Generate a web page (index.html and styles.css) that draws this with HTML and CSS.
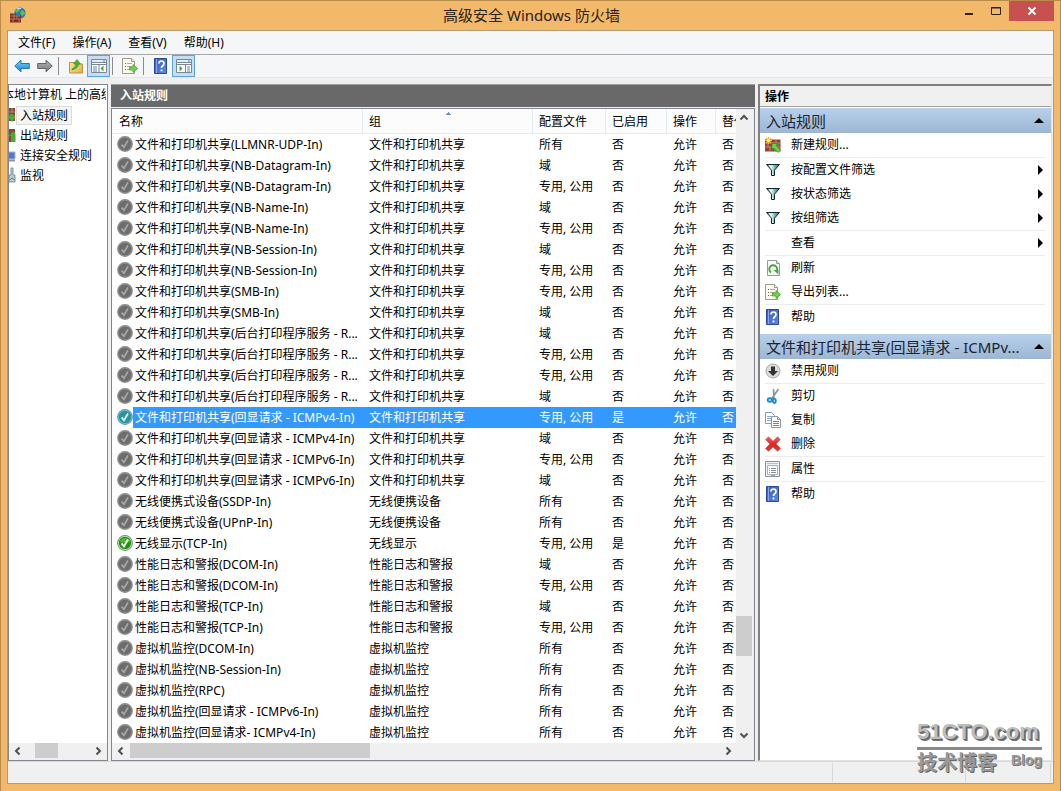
FILE: index.html
```html
<!DOCTYPE html>
<html lang="zh-CN">
<head>
<meta charset="utf-8">
<meta name="viewport" content="width=device-width, initial-scale=1">
<title>高级安全 Windows 防火墙</title>
<link rel="stylesheet" href="styles.css">
</head>
<body>
<svg class="sprite" aria-hidden="true">
  <defs>
    <linearGradient id="g-blue" x1="0" y1="0" x2="0" y2="1"><stop offset="0" stop-color="#7fd0fa"/><stop offset="1" stop-color="#0f86d6"/></linearGradient>
    <linearGradient id="g-grey" x1="0" y1="0" x2="0" y2="1"><stop offset="0" stop-color="#b5b5b5"/><stop offset="1" stop-color="#7b7b7b"/></linearGradient>
    <linearGradient id="g-help" x1="0" y1="0" x2="1" y2="1"><stop offset="0" stop-color="#3558b8"/><stop offset="1" stop-color="#5f8be4"/></linearGradient>
    <linearGradient id="g-red" x1="0" y1="0" x2="0" y2="1"><stop offset="0" stop-color="#ee6a60"/><stop offset=".5" stop-color="#e02222"/><stop offset="1" stop-color="#d44038"/></linearGradient>
    <linearGradient id="g-folder" x1="0" y1="0" x2="1" y2="1"><stop offset="0" stop-color="#fbe7a0"/><stop offset="1" stop-color="#dfb04a"/></linearGradient>
    <linearGradient id="g-funnel" x1="0" y1="0" x2="1" y2="0"><stop offset="0" stop-color="#2f8f8f"/><stop offset=".35" stop-color="#f2fbfb"/><stop offset=".6" stop-color="#7fbdbd"/><stop offset="1" stop-color="#0e6f72"/></linearGradient>
    <symbol id="off" viewBox="0 0 16 16"><circle cx="8" cy="8" r="7.9" fill="#8b8b8b"/><circle cx="8" cy="8" r="6.3" fill="#6d6d6d"/><path d="M4.6 8.6 7 11.4 11 4.4" fill="none" stroke="#a9a9a9" stroke-width="1.7"/></symbol>
    <symbol id="on" viewBox="0 0 16 16"><circle cx="8" cy="8" r="7.9" fill="#6f8f6c"/><circle cx="8" cy="8" r="6.9" fill="#d5ead0"/><circle cx="8" cy="8" r="6.2" fill="#23930f"/><path d="M2.5 6.5a6 6 0 0 1 11 0Q8 9 2.5 6.5" fill="#4db836"/><path d="M4.6 8.4 7 11.3 11 4.6" fill="none" stroke="#fff" stroke-width="1.9"/></symbol>
    <symbol id="on-sel" viewBox="0 0 16 16"><circle cx="8" cy="8" r="7.9" fill="#4f95c4"/><circle cx="8" cy="8" r="6.9" fill="#82c0df"/><circle cx="8" cy="8" r="6.2" fill="#2b9690"/><path d="M4.6 8.4 7 11.3 11 4.6" fill="none" stroke="#cfeaff" stroke-width="1.9"/></symbol>
    <symbol id="app" viewBox="0 0 16 16"><circle cx="10" cy="6" r="5.6" fill="#2479b9"/><path d="M5 4q3-4 6-3l-2 3-2 2M12 3q3 1 3 4l-3 2-2-3z" fill="#62bd4b"/><path d="M7 2q2-1 4-.5" stroke="#c6eaf7" fill="none"/><path d="M0 6.500h6v2h5v7H0z" fill="#7d2f22"/><path d="M0 9h10M0 12h11M4 7v2M7 9v3M3 12v3M9 12v3M4 9v3" stroke="#c1806f" stroke-width=".8"/></symbol>
    <symbol id="back" viewBox="0 0 16 16"><path d="M.7 8 7 2.2V5.500h8.300v5H7v3.300z" fill="url(#g-blue)" stroke="#2a75ad"/></symbol>
    <symbol id="forward" viewBox="0 0 16 16"><path d="M15.300 8 9 2.200V5.500H.7v5H9v3.300z" fill="url(#g-grey)" stroke="#656565"/></symbol>
    <symbol id="folder-up" viewBox="0 0 16 16"><path d="M1.500 4.500h5l1 1.500h7v9h-13z" fill="url(#g-folder)" stroke="#bd933f"/><path d="M4 11q4-2 4-5H5.500L9 1.500 12.500 6H10.500q0 4-6.500 6z" fill="#49b82c" stroke="#2c8b1c" stroke-width=".6"/></symbol>
    <symbol id="pane-left" viewBox="0 0 16 16"><path d="M.5 1.500h15v13H.5z" fill="#fff" stroke="#7a8796"/><path d="M1 2h14v2H1z" fill="#e8edf3"/><path d="M.5 4.500h15M8 7v7M.5 6.500h15" stroke="#7a8796"/><path d="M2 9h4M2 11h4M2 13h4M12 3h2" stroke="#5f86b8"/><path d="M12.500 7.500v6L9.500 10.500z" fill="#44a82d"/></symbol>
    <symbol id="pane-right" viewBox="0 0 16 16"><path d="M.5 1.500h15v13H.5z" fill="#fff" stroke="#7a8796"/><path d="M1 2h14v2H1z" fill="#e8edf3"/><path d="M.5 4.500h15M9.500 7v7M.5 6.500h15" stroke="#7a8796"/><path d="M11 9h3M11 11h3M11 13h3M12 3h2" stroke="#5f86b8"/><path d="M3.500 7.500v6L6.500 10.500z" fill="#44a82d"/></symbol>
    <symbol id="export" viewBox="0 0 16 16"><path d="M.5.5h9l3 3v12H.5z" fill="#fdfaed" stroke="#9b9a8c"/><path d="M9.500.5v3h3" fill="#eee" stroke="#9b9a8c"/><path d="M3 5.500h1M3 8.500h1M3 11.500h1" stroke="#666"/><path d="M5 5.500h5M5 8.500h5M5 11.500h4" stroke="#aaa"/><path d="M7.500 9h3.500V6.500l4.700 4-4.700 4V12H7.500z" fill="#6fd24e" stroke="#3a9d24" stroke-width=".7"/></symbol>
    <symbol id="help" viewBox="0 0 16 16"><path d="M1.500.5h12v15h-12z" fill="url(#g-help)" stroke="#2b479c"/><path d="M3.500 1v14" stroke="#86a7ec"/><path d="M6 5.500Q6 3 8.500 3T11 5.500Q11 7 9.500 8 8.500 8.600 8.500 10" fill="none" stroke="#fff" stroke-width="1.700"/><path d="M7.600 11.500h1.800v1.800H7.600z" fill="#fff"/></symbol>
    <symbol id="new-rule" viewBox="0 0 16 16"><path d="M0 2.500h15.500v12H0z" fill="#93432f"/><path d="M0 6h15.500M0 10h15.500M5 2.500V6M11 2.500V6M8 6v4M3 6v4M13 6v4M5 10v4.500M10 10v4.500" stroke="#d09a83" stroke-width=".8"/><path d="M3.500 0v7M0 3.500h7M1 1l5 5M6 1 1 6" stroke="#f5b63a" stroke-width="1.200"/><circle cx="3.500" cy="3.500" r="1.500" fill="#fff3ab"/><path d="M7 6.500h6l-2 2 4.500 4.500-2.500 2.500L8.500 11 7 13z" fill="#6cd44b" stroke="#2d8c1d" stroke-width=".7"/></symbol>
    <symbol id="filter" viewBox="0 0 16 16"><path d="M1.500 2.500h13L9.500 8.200V13.500h-3V8.200z" fill="url(#g-funnel)" stroke="#10282b"/></symbol>
    <symbol id="refresh" viewBox="0 0 16 16"><path d="M2.500.5h9l3 3v12h-12z" fill="#f7f9f7" stroke="#999"/><path d="M11.500.5v3h3" fill="#ddd" stroke="#999"/><path d="M6 12.500a4 4 0 1 1 5.500-1" fill="none" stroke="#4ba53a" stroke-width="1.900"/><path d="M8.500 10h5v4.500z" fill="#4ba53a"/></symbol>
    <symbol id="disable" viewBox="0 0 16 16"><circle cx="8" cy="8" r="7" fill="#dcdcdc" stroke="#aaa"/><path d="M6 3.500h4V8h3l-5 5-5-5h3z" fill="#333"/></symbol>
    <symbol id="cut" viewBox="0 0 16 16"><path d="M13.500 1 6.500 11M8.500 1l.5 10" stroke="#8297a8" stroke-width="1.700"/><ellipse cx="4.800" cy="12" rx="2.100" ry="1.800" fill="#bfe3f7" stroke="#188bd0" stroke-width="1.800"/><ellipse cx="9.300" cy="12.800" rx="1.500" ry="2.200" fill="#bfe3f7" stroke="#188bd0" stroke-width="1.800"/></symbol>
    <symbol id="copy" viewBox="0 0 16 16"><path d="M.5.5h6l3 3v8h-9z" fill="#fff" stroke="#8c98a3"/><path d="M2 4.500h4M2 6.500h4M2 8.500h4" stroke="#8ba9c9"/><path d="M6.500 4.500h6l3 3v8h-9z" fill="#fff" stroke="#8c98a3"/><path d="M12.500 4.500v3h3" fill="none" stroke="#8c98a3"/><path d="M8 9.500h6M8 11.500h6M8 13.500h6" stroke="#5d89bd"/></symbol>
    <symbol id="delete" viewBox="0 0 16 16"><path d="M3.500.8 8 5.300 12.500.8 15.200 3.500 11 8l4.500 4.300-2.800 3L8 11l-4.500 4.300-3-2.800L5 8 .6 3.800z" fill="url(#g-red)" stroke="#c43c35" stroke-width=".6"/></symbol>
    <symbol id="props" viewBox="0 0 16 16"><path d="M.5.500h14v15H.5z" fill="#eef1f4" stroke="#8a939b"/><path d="M2.500 4.500h10v9h-10z" fill="#fff" stroke="#aab2ba"/><path d="M2 2.500h11" stroke="#b6bec6"/><path d="M4 7.500h1M4 9.500h1M4 11.500h1M6 7.500h5M6 9.500h5M6 11.500h5" stroke="#87939f"/><path d="M6 14.500h4" stroke="#56c3e4"/></symbol>
    <symbol id="inbound" viewBox="0 0 16 16"><path d="M2 1h13v13H2z" fill="#93432f"/><path d="M2 5h13M2 9h13M12 1v4" stroke="#c58772"/><path d="M10 7h3v3h2.500L12 15 8 10h2z" fill="#43b02e"/></symbol>
    <symbol id="outbound" viewBox="0 0 16 16"><path d="M2 2h13v13H2z" fill="#93432f"/><path d="M11 15V9H9l4-5 2.500 3v8z" fill="#43b02e"/></symbol>
    <symbol id="connect" viewBox="0 0 16 16"><path d="M6 5h9v7H6z" fill="#4e78db" stroke="#a9b3c8"/><path d="M9 13.500h6" stroke="#8c93a5" stroke-width="2"/></symbol>
    <symbol id="monitor" viewBox="0 0 16 16"><path d="M11 1h2v7h2v7H9V8h2z" fill="#b9c8d9" stroke="#7f93a9"/><path d="M10 13l2-2 3 2" fill="none" stroke="#43a02e"/></symbol>
    <symbol id="chevron" viewBox="0 0 16 16"><path d="M9.500 4.500 6 8l3.500 3.500" fill="none" stroke="#505050" stroke-width="2"/></symbol>
  </defs>
</svg>

<div class="window">
  <header class="titlebar">
    <svg class="icon"><use href="#app"/></svg>
    <h1 class="title">高级安全 Windows 防火墙</h1>
    <div class="window-buttons">
      <button class="wbtn" aria-label="最小化"><svg class="glyph" viewBox="0 0 12 12"><path d="M2 8h8v2H2z" fill="#2a2118"/></svg></button>
      <button class="wbtn" aria-label="最大化"><svg class="glyph" viewBox="0 0 12 12"><path d="M1.500 2.500h9v7h-9zM1 3h10" fill="none" stroke="#2a2118"/></svg></button>
      <button class="wbtn close" aria-label="关闭"><svg class="glyph" viewBox="0 0 12 12"><path d="M2.500 2.500l7 7M9.500 2.500l-7 7" stroke="#fff" stroke-width="2"/></svg></button>
    </div>
  </header>

  <div class="client">
    <nav class="menubar" aria-label="菜单">
      <button>文件(F)</button><button>操作(A)</button><button>查看(V)</button><button>帮助(H)</button>
    </nav>
    <div class="toolbar" role="toolbar">
      <button aria-label="后退"><svg class="icon"><use href="#back"/></svg></button>
      <button aria-label="前进"><svg class="icon"><use href="#forward"/></svg></button>
      <span class="divider"></span>
      <button aria-label="上一级"><svg class="icon"><use href="#folder-up"/></svg></button>
      <button class="pressed" aria-label="显示控制台树" aria-pressed="true"><svg class="icon"><use href="#pane-left"/></svg></button>
      <span class="divider"></span>
      <button aria-label="导出列表"><svg class="icon"><use href="#export"/></svg></button>
      <span class="divider"></span>
      <button aria-label="帮助"><svg class="icon"><use href="#help"/></svg></button>
      <button class="pressed" aria-label="显示操作窗格" aria-pressed="true"><svg class="icon"><use href="#pane-right"/></svg></button>
    </div>

    <main class="panes">
      <section class="tree-pane">
        <div class="tree-view">
          <ul class="tree">
            <li class="root">本地计算机 上的高级安全</li>
            <li><svg class="icon"><use href="#inbound"/></svg><span class="label selected">入站规则</span></li>
            <li><svg class="icon"><use href="#outbound"/></svg><span class="label">出站规则</span></li>
            <li><svg class="icon"><use href="#connect"/></svg><span class="label">连接安全规则</span></li>
            <li><svg class="icon"><use href="#monitor"/></svg><span class="label">监视</span></li>
          </ul>
        </div>
        <div class="hscroll tree-scroll">
          <button aria-label="向左滚动"><svg class="icon"><use href="#chevron"/></svg></button>
          <span class="lead"></span><span class="thumb"></span><span class="track"></span>
          <button class="flip" aria-label="向右滚动"><svg class="icon"><use href="#chevron"/></svg></button>
        </div>
      </section>

      <section class="list-pane">
        <h2 class="list-title">入站规则</h2>
        <div class="list-frame">
          <div class="list-view">
            <table class="rules">
              <colgroup><col class="c-name"><col class="c-group"><col class="c-profile"><col class="c-enabled"><col class="c-action"><col></colgroup>
              <thead><tr><th>名称</th><th class="sorted">组</th><th>配置文件</th><th>已启用</th><th>操作</th><th>替代</th></tr></thead>
              <tbody>
                <tr><td><svg class="icon"><use href="#off"/></svg>文件和打印机共享(LLMNR-UDP-In)</td><td>文件和打印机共享</td><td>所有</td><td>否</td><td>允许</td><td>否</td></tr>
                <tr><td><svg class="icon"><use href="#off"/></svg>文件和打印机共享(NB-Datagram-In)</td><td>文件和打印机共享</td><td>域</td><td>否</td><td>允许</td><td>否</td></tr>
                <tr><td><svg class="icon"><use href="#off"/></svg>文件和打印机共享(NB-Datagram-In)</td><td>文件和打印机共享</td><td>专用, 公用</td><td>否</td><td>允许</td><td>否</td></tr>
                <tr><td><svg class="icon"><use href="#off"/></svg>文件和打印机共享(NB-Name-In)</td><td>文件和打印机共享</td><td>域</td><td>否</td><td>允许</td><td>否</td></tr>
                <tr><td><svg class="icon"><use href="#off"/></svg>文件和打印机共享(NB-Name-In)</td><td>文件和打印机共享</td><td>专用, 公用</td><td>否</td><td>允许</td><td>否</td></tr>
                <tr><td><svg class="icon"><use href="#off"/></svg>文件和打印机共享(NB-Session-In)</td><td>文件和打印机共享</td><td>域</td><td>否</td><td>允许</td><td>否</td></tr>
                <tr><td><svg class="icon"><use href="#off"/></svg>文件和打印机共享(NB-Session-In)</td><td>文件和打印机共享</td><td>专用, 公用</td><td>否</td><td>允许</td><td>否</td></tr>
                <tr><td><svg class="icon"><use href="#off"/></svg>文件和打印机共享(SMB-In)</td><td>文件和打印机共享</td><td>专用, 公用</td><td>否</td><td>允许</td><td>否</td></tr>
                <tr><td><svg class="icon"><use href="#off"/></svg>文件和打印机共享(SMB-In)</td><td>文件和打印机共享</td><td>域</td><td>否</td><td>允许</td><td>否</td></tr>
                <tr><td><svg class="icon"><use href="#off"/></svg>文件和打印机共享(后台打印程序服务 - R...</td><td>文件和打印机共享</td><td>域</td><td>否</td><td>允许</td><td>否</td></tr>
                <tr><td><svg class="icon"><use href="#off"/></svg>文件和打印机共享(后台打印程序服务 - R...</td><td>文件和打印机共享</td><td>专用, 公用</td><td>否</td><td>允许</td><td>否</td></tr>
                <tr><td><svg class="icon"><use href="#off"/></svg>文件和打印机共享(后台打印程序服务 - R...</td><td>文件和打印机共享</td><td>专用, 公用</td><td>否</td><td>允许</td><td>否</td></tr>
                <tr><td><svg class="icon"><use href="#off"/></svg>文件和打印机共享(后台打印程序服务 - R...</td><td>文件和打印机共享</td><td>域</td><td>否</td><td>允许</td><td>否</td></tr>
                <tr class="current"><td><svg class="icon"><use href="#on-sel"/></svg>文件和打印机共享(回显请求 - ICMPv4-In)</td><td>文件和打印机共享</td><td>专用, 公用</td><td>是</td><td>允许</td><td>否</td></tr>
                <tr><td><svg class="icon"><use href="#off"/></svg>文件和打印机共享(回显请求 - ICMPv4-In)</td><td>文件和打印机共享</td><td>域</td><td>否</td><td>允许</td><td>否</td></tr>
                <tr><td><svg class="icon"><use href="#off"/></svg>文件和打印机共享(回显请求 - ICMPv6-In)</td><td>文件和打印机共享</td><td>专用, 公用</td><td>否</td><td>允许</td><td>否</td></tr>
                <tr><td><svg class="icon"><use href="#off"/></svg>文件和打印机共享(回显请求 - ICMPv6-In)</td><td>文件和打印机共享</td><td>域</td><td>否</td><td>允许</td><td>否</td></tr>
                <tr><td><svg class="icon"><use href="#off"/></svg>无线便携式设备(SSDP-In)</td><td>无线便携设备</td><td>所有</td><td>否</td><td>允许</td><td>否</td></tr>
                <tr><td><svg class="icon"><use href="#off"/></svg>无线便携式设备(UPnP-In)</td><td>无线便携设备</td><td>所有</td><td>否</td><td>允许</td><td>否</td></tr>
                <tr><td><svg class="icon"><use href="#on"/></svg>无线显示(TCP-In)</td><td>无线显示</td><td>专用, 公用</td><td>是</td><td>允许</td><td>否</td></tr>
                <tr><td><svg class="icon"><use href="#off"/></svg>性能日志和警报(DCOM-In)</td><td>性能日志和警报</td><td>域</td><td>否</td><td>允许</td><td>否</td></tr>
                <tr><td><svg class="icon"><use href="#off"/></svg>性能日志和警报(DCOM-In)</td><td>性能日志和警报</td><td>专用, 公用</td><td>否</td><td>允许</td><td>否</td></tr>
                <tr><td><svg class="icon"><use href="#off"/></svg>性能日志和警报(TCP-In)</td><td>性能日志和警报</td><td>域</td><td>否</td><td>允许</td><td>否</td></tr>
                <tr><td><svg class="icon"><use href="#off"/></svg>性能日志和警报(TCP-In)</td><td>性能日志和警报</td><td>专用, 公用</td><td>否</td><td>允许</td><td>否</td></tr>
                <tr><td><svg class="icon"><use href="#off"/></svg>虚拟机监控(DCOM-In)</td><td>虚拟机监控</td><td>所有</td><td>否</td><td>允许</td><td>否</td></tr>
                <tr><td><svg class="icon"><use href="#off"/></svg>虚拟机监控(NB-Session-In)</td><td>虚拟机监控</td><td>所有</td><td>否</td><td>允许</td><td>否</td></tr>
                <tr><td><svg class="icon"><use href="#off"/></svg>虚拟机监控(RPC)</td><td>虚拟机监控</td><td>所有</td><td>否</td><td>允许</td><td>否</td></tr>
                <tr><td><svg class="icon"><use href="#off"/></svg>虚拟机监控(回显请求 - ICMPv6-In)</td><td>虚拟机监控</td><td>所有</td><td>否</td><td>允许</td><td>否</td></tr>
                <tr><td><svg class="icon"><use href="#off"/></svg>虚拟机监控(回显请求- ICMPv4-In)</td><td>虚拟机监控</td><td>所有</td><td>否</td><td>允许</td><td>否</td></tr>
              </tbody>
            </table>
          </div>
          <div class="vscroll">
            <button class="up" aria-label="向上滚动"><svg class="icon"><use href="#chevron"/></svg></button>
            <span class="lead"></span><span class="thumb"></span><span class="track"></span>
            <button class="down" aria-label="向下滚动"><svg class="icon"><use href="#chevron"/></svg></button>
          </div>
          <div class="hscroll list-scroll">
            <button aria-label="向左滚动"><svg class="icon"><use href="#chevron"/></svg></button>
            <span class="thumb"></span><span class="track"></span>
            <button class="flip" aria-label="向右滚动"><svg class="icon"><use href="#chevron"/></svg></button>
          </div>
        </div>
      </section>

      <aside class="action-pane">
        <h2 class="action-title">操作</h2>
        <section class="group">
          <button class="group-head"><span class="group-name">入站规则</span><span class="arrow-up"></span></button>
          <button class="action"><svg class="icon"><use href="#new-rule"/></svg>新建规则...</button>
          <hr>
          <button class="action"><svg class="icon"><use href="#filter"/></svg>按配置文件筛选<span class="arrow-right"></span></button>
          <button class="action"><svg class="icon"><use href="#filter"/></svg>按状态筛选<span class="arrow-right"></span></button>
          <button class="action"><svg class="icon"><use href="#filter"/></svg>按组筛选<span class="arrow-right"></span></button>
          <hr>
          <button class="action"><span class="icon"></span>查看<span class="arrow-right"></span></button>
          <hr>
          <button class="action"><svg class="icon"><use href="#refresh"/></svg>刷新</button>
          <button class="action"><svg class="icon"><use href="#export"/></svg>导出列表...</button>
          <hr>
          <button class="action"><svg class="icon"><use href="#help"/></svg>帮助</button>
        </section>
        <section class="group">
          <button class="group-head"><span class="group-name">文件和打印机共享(回显请求 - ICMPv...</span><span class="arrow-up"></span></button>
          <button class="action"><svg class="icon"><use href="#disable"/></svg>禁用规则</button>
          <hr>
          <button class="action"><svg class="icon"><use href="#cut"/></svg>剪切</button>
          <button class="action"><svg class="icon"><use href="#copy"/></svg>复制</button>
          <button class="action"><svg class="icon"><use href="#delete"/></svg>删除</button>
          <hr>
          <button class="action"><svg class="icon"><use href="#props"/></svg>属性</button>
          <hr>
          <button class="action"><svg class="icon"><use href="#help"/></svg>帮助</button>
        </section>
      </aside>
    </main>

    <footer class="statusbar"><span class="cell wide"></span><span class="cell"></span><span class="cell last"></span></footer>
  </div>

  <div class="watermark">
    <div class="brand">51CTO.com</div>
    <div class="tagline"><span class="cn">技术博客</span><span class="blog">Blog</span></div>
  </div>
</div>
</body>
</html>
```
FILE: styles.css
```css
* { box-sizing: border-box; }

body {
  margin: 0;
  font: 12px/20px "Noto Sans", "Noto Sans CJK SC", sans-serif;
  color: #000;
}

button {
  margin: 0;
  padding: 0;
  border: 0;
  background: none;
  font: inherit;
  color: inherit;
  text-align: left;
}

h1, h2, ul, hr { margin: 0; padding: 0; }

.sprite { position: absolute; width: 0; height: 0; }
.icon { display: block; flex: none; width: 16px; height: 16px; }

.window {
  position: relative;
  display: flex;
  flex-direction: column;
  min-height: 100vh;
  padding: 0 7px 7px;
  border: 1px solid #b98c4b;
  background: #f3b96a;
}

/* title bar */
.titlebar {
  display: grid;
  grid-template-columns: 1fr auto 1fr;
  height: 29px;
  padding-left: 2px;
}
.titlebar > .icon { margin-top: 6px; }
.title { font-size: 15px; line-height: 29px; font-weight: 400; color: #2a2118; }
.window-buttons { display: flex; justify-content: flex-end; height: 20px; margin-right: -1px; }
.wbtn { display: flex; align-items: center; justify-content: center; width: 27px; }
.wbtn.close { width: 45px; background: #c75050; }
.glyph { width: 12px; height: 12px; }

.client {
  display: flex;
  flex: 1;
  flex-direction: column;
  border: 1px solid #b79a6c;
  margin: 0 -1px;
  background: #f0f0f0;
}

.menubar {
  display: flex;
  gap: 1px;
  height: 24px;
  padding-left: 2px;
  background: #f4f6f8;
  border-bottom: 1px solid #a7a8aa;
}
.menubar button { padding: 0 8px; line-height: 23px; }

.toolbar {
  display: flex;
  align-items: center;
  height: 23px;
  padding-left: 2px;
  background: #f4f6f8;
  border-bottom: 1px solid #e6e7e8;
}
.toolbar button { display: flex; align-items: center; justify-content: center; width: 23px; height: 22px; border: 1px solid transparent; }
.toolbar .pressed { background: #c5def5; border-color: #5ea3dd; }
.divider { width: 1px; height: 18px; margin: 0 5px 0 2px; background: #8c8c8c; }

/* panes */
.panes { display: flex; flex: 1; gap: 3px; padding: 6px 1px 0 0; }

.tree-pane {
  display: flex;
  flex: none;
  flex-direction: column;
  width: 100px;
  border: 1px solid #82878f;
  background: #fff;
}
.tree-view { flex: 1; overflow: hidden; margin: 0 1px 0 0; }
.tree { margin-left: -27px; list-style: none; white-space: nowrap; }
.tree li { display: flex; align-items: center; height: 20px; padding-left: 18px; }
.tree .root { padding-left: 20px; }
.label { padding: 0 3px; border: 1px solid transparent; line-height: 17px; }
.label.selected { background: #f5f5f5; border-color: #dadada; }

.list-pane { display: flex; flex: 1; flex-direction: column; min-width: 0; }
.list-title {
  height: 23px;
  padding-left: 9px;
  border-top: 1px solid #a0a0a0;
  background: #696969;
  color: #fff;
  font-size: 12px;
  line-height: 21px;
}
.list-frame {
  display: grid;
  flex: 1;
  grid-template-columns: minmax(0, 1fr) 18px;
  grid-template-rows: 1fr 17px;
  margin-top: 1px;
  border: 1px solid #82878f;
  background: #fff;
}
.list-view { overflow: hidden; }

.rules { width: 100%; table-layout: fixed; border-collapse: separate; border-spacing: 0; }
.c-name { width: 251px; }
.c-group { width: 170px; }
.c-profile { width: 73px; }
.c-enabled { width: 61px; }
.c-action { width: 49px; }
.rules th {
  height: 25px;
  padding: 2px 0 0 6px;
  overflow: hidden;
  border-right: 1px solid #dfeaf5;
  border-bottom: 1px solid #dfeaf5;
  background: #fcfcfc;
  font-weight: 400;
  text-align: left;
  white-space: nowrap;
}
.rules th:last-child { border-right: 0; }
.rules .sorted {
  background: conic-gradient(from 135deg at 50% 0, #6d93b8 90deg, transparent 0) 50% 3px / 6px 3px no-repeat #fcfcfc;
}
.rules td { height: 21px; padding: 0 0 0 6px; overflow: hidden; line-height: 21px; white-space: nowrap; }
.rules td:first-child { padding-left: 5px; }
.rules th:first-child { padding-left: 7px; }
.rules td .icon { display: inline-block; margin: 2px 2px 0 0; vertical-align: top; }
.current td { background: #3399ff; color: #fff; }
.current td:first-child { background: linear-gradient(to right, #fff 21px, #3399ff 21px); }

/* scroll bars */
.hscroll, .vscroll { display: flex; background: #f0f0f0; }
.hscroll { height: 17px; padding-bottom: 2px; }
.hscroll button { display: flex; align-items: center; justify-content: center; width: 18px; }
.vscroll { flex-direction: column; padding-right: 2px; }
.vscroll button { height: 17px; }
.thumb { background: #cdcdcd; }
.track { flex: 1; }
.flip { transform: scaleX(-1); }
.up .icon { transform: rotate(90deg); }
.down .icon { transform: rotate(-90deg); }
.tree-scroll .lead { width: 8px; }
.tree-scroll .thumb { width: 23px; }
.list-scroll { grid-column: 1 / -1; padding-right: 17px; }
.list-scroll .thumb { width: 240px; }
.vscroll .lead { flex: 7; }
.vscroll .thumb { flex: none; height: 40px; }
.vscroll .track { flex: 1; }

/* actions */
.action-pane {
  display: flex;
  flex: none;
  flex-direction: column;
  width: 294px;
  border-style: solid;
  border-width: 2px 1px 1px 2px;
  border-color: #808080 #e3e3e3 #e3e3e3 #808080;
  background: #fff;
}
.action-title {
  height: 21px;
  padding-left: 5px;
  border-bottom: 1px solid #a0a0a0;
  background: #f0f0f0;
  font-size: 12px;
  line-height: 21px;
}
.group { display: flex; flex-direction: column; margin-top: 1px; }
.group + .group { margin-top: 5px; }
.group-head {
  display: flex;
  align-items: center;
  gap: 10px;
  height: 25px;
  padding: 0 7px 0 6px;
  background: linear-gradient(#b8d0ea, #9cb6d4);
  font-size: 15px;
  color: #1c2430;
}
.group-name { flex: 1; overflow: hidden; text-overflow: ellipsis; white-space: nowrap; }
.arrow-up { border: 5px solid transparent; border-top: 0; border-bottom-color: #000; }
.action { display: flex; align-items: center; gap: 10px; height: 24px; padding: 0 8px 0 5px; }
.arrow-right { margin-left: auto; border: 5px solid transparent; border-right: 0; border-left-color: #000; }
.group hr { height: 1px; margin: 0 6px 0 5px; border: 0; background: #ececec; }

.statusbar { display: flex; height: 22px; padding: 1px 2px 1px 0; border-top: 1px solid #d9d9d9; }
.cell { flex: none; width: 133px; border-right: 1px solid #d7d7d7; }
.cell.wide { flex: 1; }
.cell.last { width: 85px; }

.watermark {
  position: absolute;
  right: 18px;
  bottom: 15px;
  width: 125px;
  font-family: "Liberation Sans", "Noto Sans CJK SC", sans-serif;
  font-weight: 700;
  color: #bdbdbd;
  text-shadow: 1px 1px 0 #666, 2px 2px 0 #777;
}
.brand { border-bottom: 3px solid #8a8a8a; font-size: 22px; line-height: 30px; }
.tagline { display: flex; justify-content: space-between; }
.cn { font-size: 20px; line-height: 26px; color: #999; text-shadow: 1px 1px 0 #666; }
.blog { font-size: 14px; color: #999; text-shadow: 1px 1px 0 #777; }
```
